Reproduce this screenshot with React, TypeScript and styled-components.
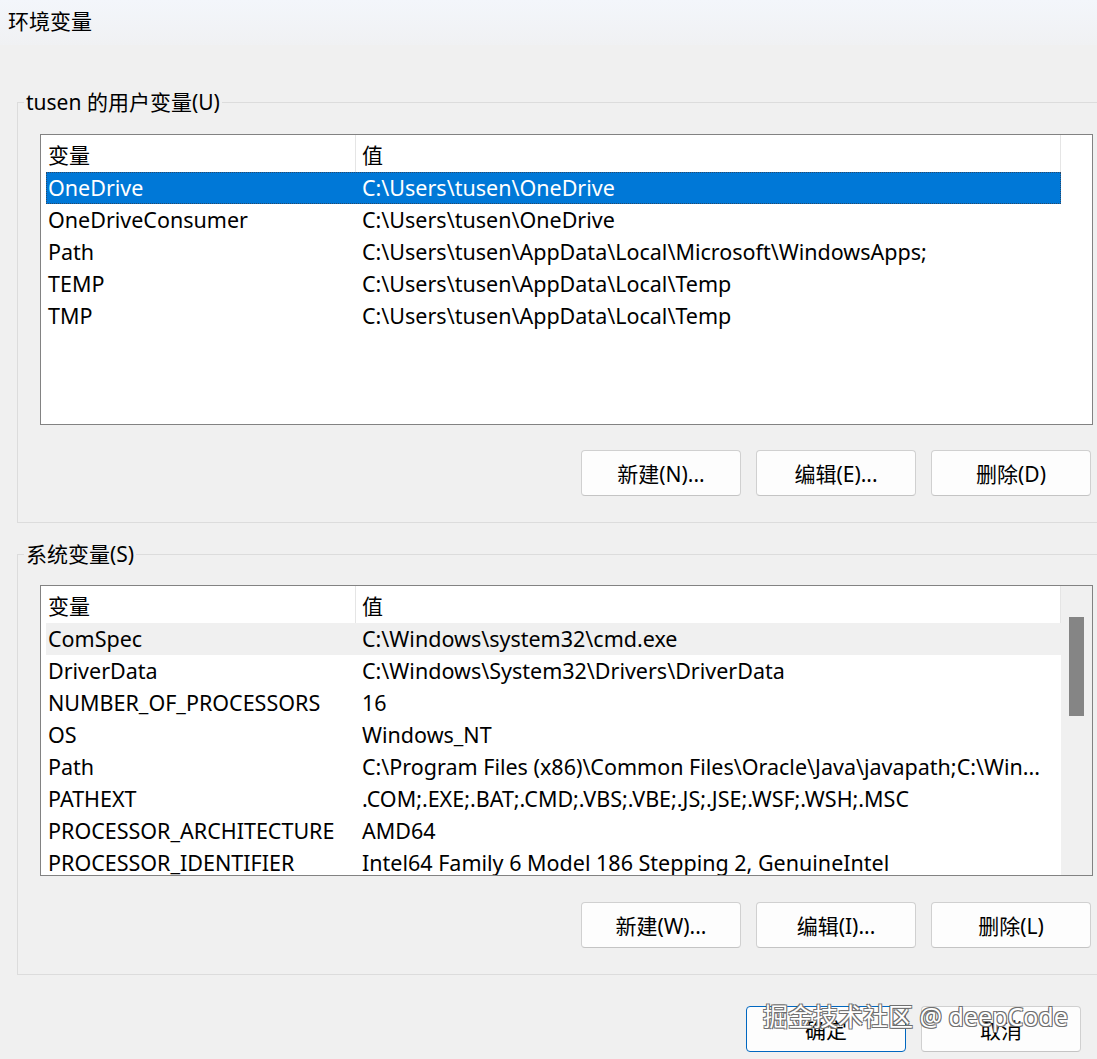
import React from "react";
import styled, { createGlobalStyle } from "styled-components";

interface IVar {
    name: string;
    value: string;
}

const userVars: IVar[] = [
    { name: "OneDrive", value: "C:\\Users\\tusen\\OneDrive" },
    { name: "OneDriveConsumer", value: "C:\\Users\\tusen\\OneDrive" },
    { name: "Path", value: "C:\\Users\\tusen\\AppData\\Local\\Microsoft\\WindowsApps;" },
    { name: "TEMP", value: "C:\\Users\\tusen\\AppData\\Local\\Temp" },
    { name: "TMP", value: "C:\\Users\\tusen\\AppData\\Local\\Temp" },
];

const systemVars: IVar[] = [
    { name: "ComSpec", value: "C:\\Windows\\system32\\cmd.exe" },
    { name: "DriverData", value: "C:\\Windows\\System32\\Drivers\\DriverData" },
    { name: "NUMBER_OF_PROCESSORS", value: "16" },
    { name: "OS", value: "Windows_NT" },
    { name: "Path", value: "C:\\Program Files (x86)\\Common Files\\Oracle\\Java\\javapath;C:\\Win..." },
    { name: "PATHEXT", value: ".COM;.EXE;.BAT;.CMD;.VBS;.VBE;.JS;.JSE;.WSF;.WSH;.MSC" },
    { name: "PROCESSOR_ARCHITECTURE", value: "AMD64" },
    { name: "PROCESSOR_IDENTIFIER", value: "Intel64 Family 6 Model 186 Stepping 2, GenuineIntel" },
];

const GlobalStyle = createGlobalStyle`
  html, body {
    margin: 0;
    padding: 0;
  }
  body {
    width: 1097px;
    height: 1059px;
    overflow: hidden;
    background: #f0f0f0;
    font-family: "Segoe UI", "Noto Sans", "Noto Sans CJK SC", sans-serif;
    font-size: 21.5px;
    color: #000;
  }
`;

const Window = styled.div`
  position: relative;
  width: 1097px;
  height: 1059px;
  display: flex;
  flex-direction: column;
`;

const TitleBar = styled.div`
  height: 45px;
  box-sizing: border-box;
  padding: 0 0 6px 8px;
  display: flex;
  align-items: center;
  background: linear-gradient(#f3f6fb, #f0f1f3);
  font-size: 21px;
`;

const Content = styled.div`
  padding: 43px 0 0 17px;
  display: flex;
  flex-direction: column;
`;

const Group = styled.fieldset<{ $top: number; $padTop: number }>`
  margin: ${p => p.$top}px -30px 0 0;
  padding: ${p => p.$padTop}px 34px 26px 22px;
  border: 1px solid #dcdcdc;
  border-right: none;
  min-width: 0;
`;

const Legend = styled.legend`
  margin-left: -16px;
  padding: 0 2px;
  line-height: 28px;
  font-size: 21px;
`;

const List = styled.div`
  height: 291px;
  box-sizing: border-box;
  border: 1px solid #828282;
  background: #fff;
  display: flex;
  overflow: hidden;
`;

const ListBody = styled.div`
  width: 1015px;
  padding-left: 5px;
  flex: none;
`;

const HeaderRow = styled.div`
  display: grid;
  grid-template-columns: 310px 705px;
  height: 37px;
`;

const HeaderCell = styled.div<{ $pad: number }>`
  display: flex;
  align-items: center;
  padding-left: ${p => p.$pad}px;
  border-right: 1px solid #e5e5e5;
  white-space: nowrap;
  font-size: 21px;
`;

const Row = styled.div<{ $state?: "selected" | "inactive" }>`
  display: grid;
  grid-template-columns: 310px 705px;
  height: 32px;
  align-items: center;
  box-sizing: border-box;
  background: ${p => p.$state === "selected" ? "#0078d7" : p.$state === "inactive" ? "#f0f0f0" : "transparent"};
  color: ${p => p.$state === "selected" ? "#fff" : "#000"};
  outline: ${p => p.$state === "selected" ? "1px dotted #27496b" : "none"};
  outline-offset: -1px;
`;

const Cell = styled.div<{ $pad: number }>`
  padding-left: ${p => p.$pad}px;
  white-space: nowrap;
  overflow: hidden;
  line-height: 32px;
`;

const ScrollTrack = styled.div`
  width: 31px;
  flex: none;
  background: #f0f0f0;
  padding-top: 31px;
  box-sizing: border-box;
`;

const ScrollThumb = styled.div`
  width: 15px;
  height: 99px;
  margin-left: 8px;
  background: #858585;
`;

const ButtonRow = styled.div<{ $top: number }>`
  display: flex;
  justify-content: flex-end;
  gap: 15px;
  margin-top: ${p => p.$top}px;
  padding-right: 2px;
`;

const Button = styled.button<{ $default?: boolean }>`
  width: 160px;
  height: 46px;
  padding: 0;
  background: #fdfdfd;
  border: 1px solid ${p => p.$default ? "#0067c0" : "#d0d0d0"};
  border-bottom-color: ${p => p.$default ? "#0067c0" : "#c4c4c4"};
  border-radius: 4px;
  font: inherit;
  font-size: 21px;
  color: #000;
`;

const Footer = styled.div`
  display: flex;
  justify-content: flex-end;
  gap: 15px;
  margin-top: 31px;
  padding-right: 16px;
`;

const Watermark = styled.div`
  position: absolute;
  left: 763px;
  top: 997px;
  font-size: 25px;
  color: #fff;
  white-space: nowrap;
  text-shadow: -1px -1px 0 #6f6f6f, 1px -1px 0 #6f6f6f, -1px 1px 0 #6f6f6f, 1px 1px 0 #6f6f6f;
`;

const VarList: React.FC<{ vars: IVar[]; active: number; focused: boolean; scroll?: boolean }> = (props) => {
    return (
        <List>
            <ListBody>
                <HeaderRow>
                    <HeaderCell $pad={2}>变量</HeaderCell>
                    <HeaderCell $pad={6}>值</HeaderCell>
                </HeaderRow>
                {props.vars.map((v, i) => (
                    <Row key={v.name + i} $state={i === props.active ? (props.focused ? "selected" : "inactive") : undefined}>
                        <Cell $pad={2}>{v.name}</Cell>
                        <Cell $pad={6}>{v.value}</Cell>
                    </Row>
                ))}
            </ListBody>
            {props.scroll && (
                <ScrollTrack>
                    <ScrollThumb />
                </ScrollTrack>
            )}
        </List>
    );
};

const App: React.FC = () => {
    return (
        <Window>
            <GlobalStyle />
            <TitleBar>环境变量</TitleBar>
            <Content>
                <Group $top={0} $padTop={18}>
                    <Legend>tusen 的用户变量(U)</Legend>
                    <VarList vars={userVars} active={0} focused />
                    <ButtonRow $top={25}>
                        <Button>新建(N)...</Button>
                        <Button>编辑(E)...</Button>
                        <Button>删除(D)</Button>
                    </ButtonRow>
                </Group>
                <Group $top={17} $padTop={17}>
                    <Legend>系统变量(S)</Legend>
                    <VarList vars={systemVars} active={0} focused={false} scroll />
                    <ButtonRow $top={26}>
                        <Button>新建(W)...</Button>
                        <Button>编辑(I)...</Button>
                        <Button>删除(L)</Button>
                    </ButtonRow>
                </Group>
                <Footer>
                    <Button $default>确定</Button>
                    <Button>取消</Button>
                </Footer>
            </Content>
            <Watermark>掘金技术社区 @ deepCode</Watermark>
        </Window>
    );
};

export default App;
